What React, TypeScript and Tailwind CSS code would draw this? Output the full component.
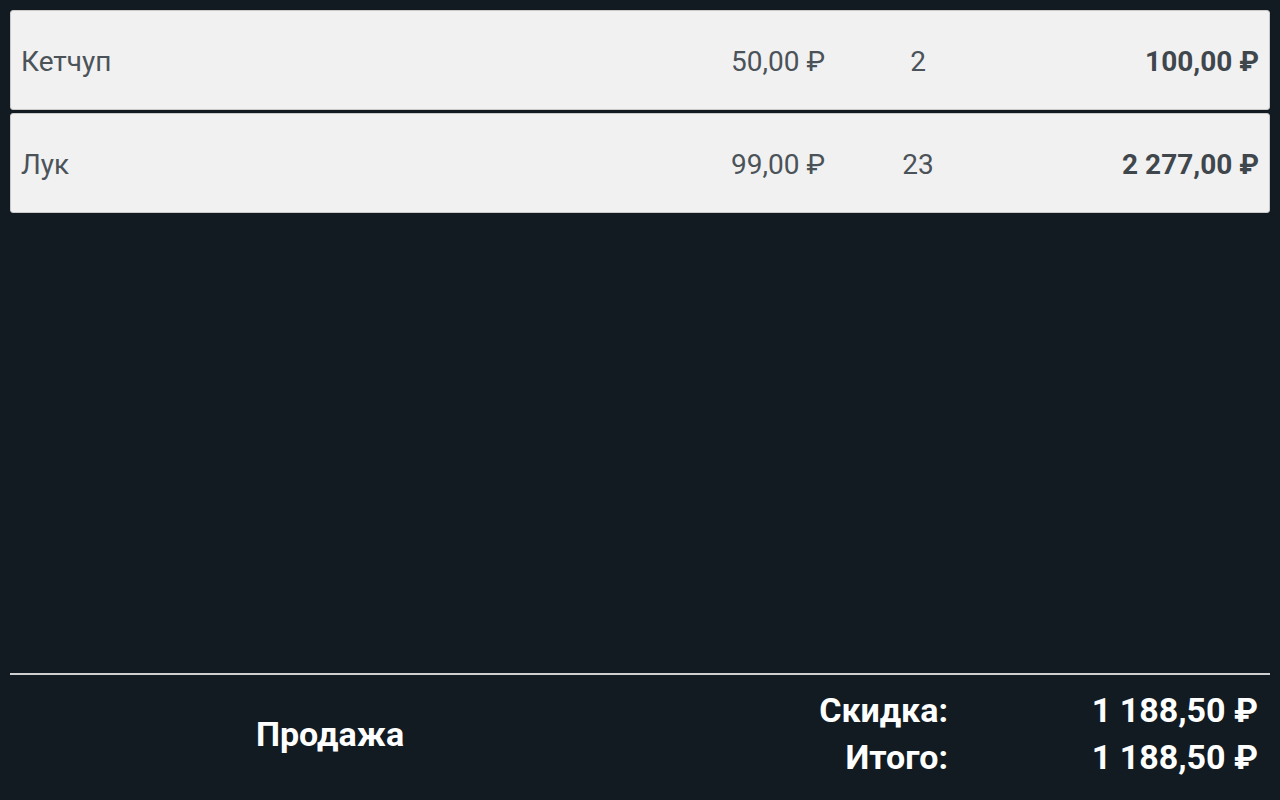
import React from 'react';

type Item = { name: string; price: string; qty: string; total: string };

const items: Item[] = [
    { name: 'Кетчуп', price: '50,00 ₽', qty: '2', total: '100,00 ₽' },
    { name: 'Лук', price: '99,00 ₽', qty: '23', total: '2 277,00 ₽' },
];

const Row: React.FC<{ item: Item }> = ({ item }) => (
    <div className="flex items-center h-[100px] bg-[#f1f1f1] rounded-[3px] border border-[#c9c9c9] pl-[10px] pr-[10px] pt-[3px] text-[28px] text-[#4b5359]">
        <div className="flex-1">{item.name}</div>
        <div className="w-[200px] text-right">{item.price}</div>
        <div className="w-[186px] text-center">{item.qty}</div>
        <div className="w-[248px] text-right font-bold text-[#3f474d]">{item.total}</div>
    </div>
);

const App: React.FC = () => {
    return (
        <div className="h-[800px] bg-[#121b22] flex flex-col px-[10px] pt-[10px] overflow-hidden" style={{ fontFamily: 'Roboto, sans-serif' }}>
            <div className="flex flex-col gap-[3px]">
                {items.map((it) => (
                    <Row key={it.name} item={it} />
                ))}
            </div>

            <div className="flex-grow" />

            <div className="h-[2px] bg-[#cfcfcf]" />
            <div className="flex h-[125px] pb-[7px] text-white font-bold text-[34px]">
                <div className="w-[640px] flex items-center justify-center">Продажа</div>
                <div className="flex-1 flex flex-col justify-center leading-[47px] pr-3">
                    <div className="flex">
                        <div className="w-[298px] text-right">Скидка:</div>
                        <div className="flex-1 text-right">1 188,50 ₽</div>
                    </div>
                    <div className="flex">
                        <div className="w-[298px] text-right">Итого:</div>
                        <div className="flex-1 text-right">1 188,50 ₽</div>
                    </div>
                </div>
            </div>
        </div>
    );
};

export default App;
